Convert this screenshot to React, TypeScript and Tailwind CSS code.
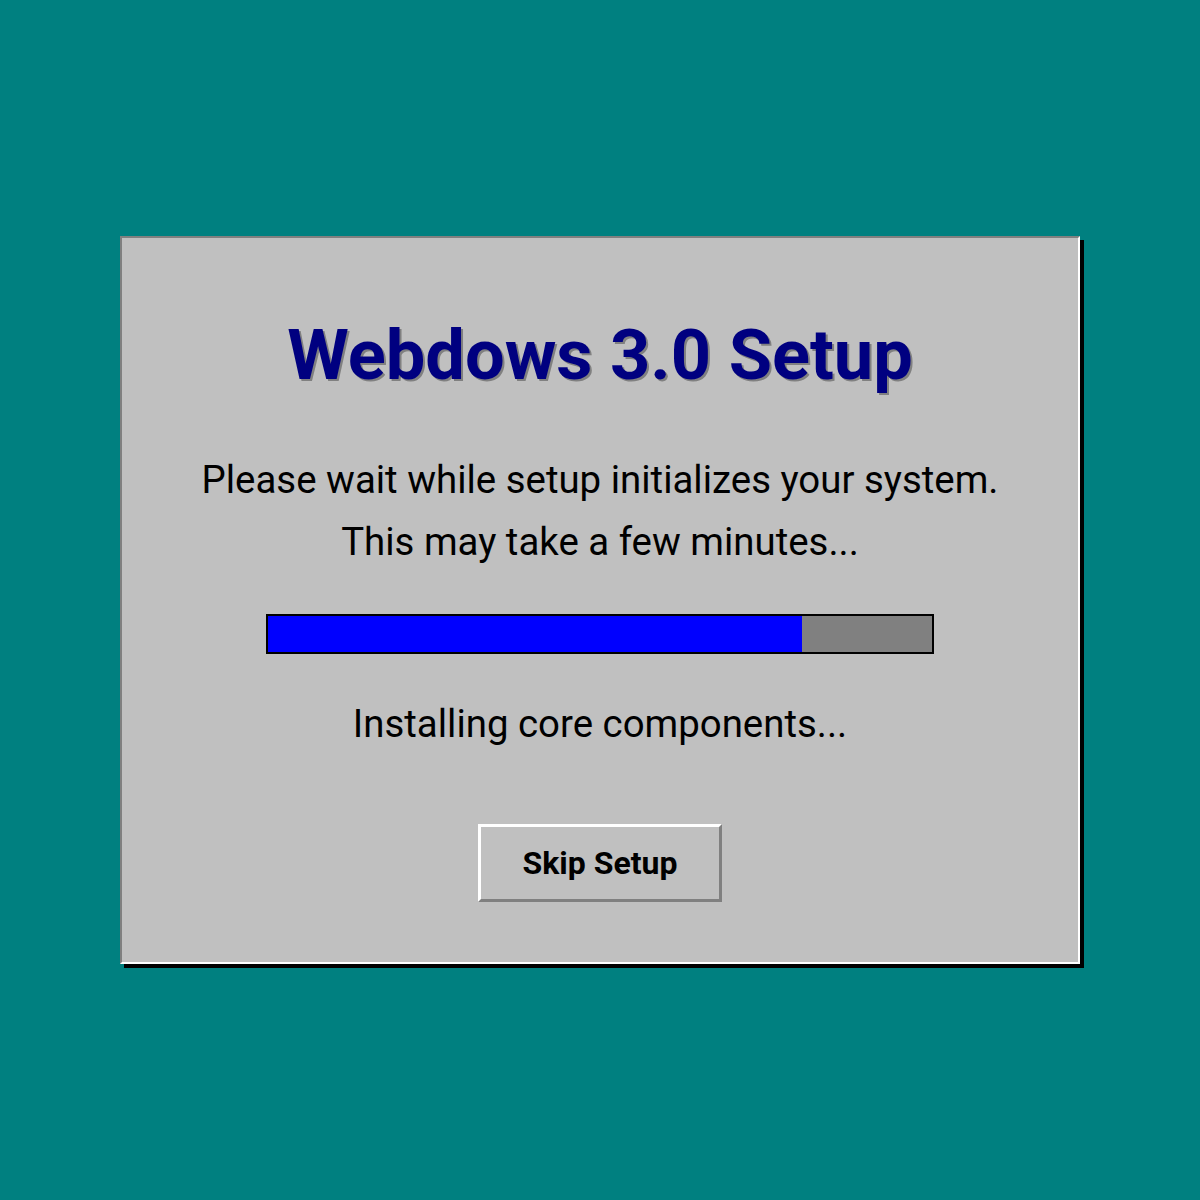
export default function App() {
  const progress = 80.4;

  return (
    <div
      className="w-full h-[1200px] bg-[#008080] flex items-center justify-center"
      style={{ fontFamily: "Roboto, 'Liberation Sans', sans-serif" }}
    >
      {/* ── Setup dialog ── */}
      <div className="w-[960px] h-[728px] bg-[#c0c0c0] border-2 border-t-[#808080] border-l-[#808080] border-b-white border-r-white shadow-[4px_4px_0_#000] flex flex-col items-center pt-[74px]">
        <h1 className="text-[70.4px] leading-[86px] font-bold text-[#000080] [text-shadow:2px_2px_0_#808080]">
          Webdows 3.0 Setup
        </h1>

        <div className="mt-[51px] text-[38.4px] leading-[62px] text-black text-center">
          <p>Please wait while setup initializes your system.</p>
          <p>This may take a few minutes...</p>
        </div>

        {/* progress bar */}
        <div className="mt-[41px] w-[668px] h-[40px] border-2 border-black bg-[#808080]">
          <div className="h-full bg-[#0000ff]" style={{ width: `${progress}%` }} />
        </div>

        <p className="mt-[45px] text-[38.4px] leading-[50px] text-black">
          Installing core components...
        </p>

        <button className="mt-[75px] w-[244px] h-[78px] bg-[#c0c0c0] border-[3px] border-t-white border-l-white border-b-[#808080] border-r-[#808080] text-[32px] font-bold text-black">
          Skip Setup
        </button>
      </div>
    </div>
  );
}
